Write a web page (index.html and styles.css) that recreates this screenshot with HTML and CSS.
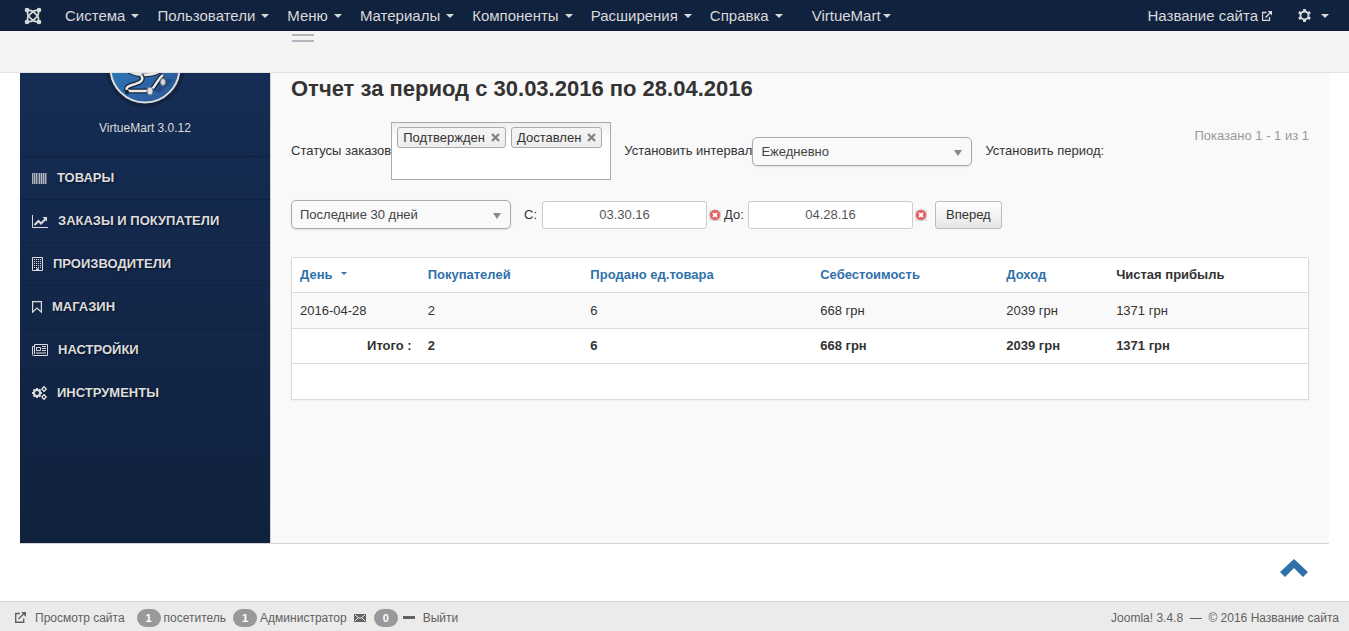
FILE: index.html
```html
<!DOCTYPE html>
<html lang="ru">
<head>
<meta charset="utf-8">
<meta name="viewport" content="width=device-width, initial-scale=1">
<title>Отчет - VirtueMart</title>
<link rel="stylesheet" href="styles.css">
</head>
<body>
<header class="navbar">
  <a class="brand" href="#" aria-label="Joomla">
    <svg width="18" height="18" viewBox="0 0 18 18" fill="none" stroke="currentColor" stroke-width="1.700" stroke-linecap="round"><path d="M3.600 5C3 7.500 4 8.800 5.500 10.200L8 12.600C9.500 14.100 11 15 13.500 14.400M14.400 5C15 7.500 14 8.800 12.500 10.200L10 12.600C8.500 14.100 7 15 4.500 14.400M4.500 3.600C7 3 8.500 3.900 10 5.400L12.500 7.800C14 9.200 15 10.500 14.400 13M13.500 3.600C11 3 9.500 3.900 8 5.400L5.500 7.800C4 9.200 3 10.500 3.600 13"/><g fill="currentColor" stroke="none"><circle cx="3" cy="3" r="2.300"/><circle cx="15" cy="3" r="2.300"/><circle cx="3" cy="15" r="2.300"/><circle cx="15" cy="15" r="2.300"/></g></svg>
  </a>
  <nav class="nav">
    <a class="nav-link" href="#">Система<span class="caret"></span></a>
    <a class="nav-link" href="#">Пользователи<span class="caret"></span></a>
    <a class="nav-link" href="#">Меню<span class="caret"></span></a>
    <a class="nav-link" href="#">Материалы<span class="caret"></span></a>
    <a class="nav-link" href="#">Компоненты<span class="caret"></span></a>
    <a class="nav-link" href="#">Расширения<span class="caret"></span></a>
    <a class="nav-link" href="#">Справка<span class="caret"></span></a>
    <a class="nav-link nav-extra" href="#">VirtueMart<span class="caret"></span></a>
  </nav>
  <a class="site-link" href="#">Название сайта
    <svg width="10" height="10" viewBox="0 0 10 10" fill="none" stroke="currentColor"><path d="M4.500 1.500h-4v8h7V6" stroke-width="1.300"/><path d="M3.500 6.500 8 2" stroke-width="1.500"/><path d="M5.500 0H10v4.500z" fill="currentColor" stroke="none"/></svg>
  </a>
  <button class="gear" type="button" aria-label="Профиль">
    <svg width="13" height="13" viewBox="0 0 14 14" fill="none" stroke="currentColor"><circle cx="7" cy="7" r="4.300" stroke-width="2"/><path d="M7 0v2.500M7 11.500V14M.9 3.500l2.200 1.200M10.900 9.300l2.200 1.200M13.100 3.500l-2.200 1.200M3.100 9.300.9 10.500" stroke-width="3"/></svg>
    <span class="caret"></span>
  </button>
</header>
<div class="subhead"><span class="toggle-lines"></span></div>

<div class="page">
  <aside class="sidebar">
    <div class="logo">
      <svg width="80" height="37" viewBox="0 0 80 37">
        <defs>
          <linearGradient id="disc" x1="0" y1="0" x2="1" y2="1"><stop offset="0" stop-color="#2b86c6"/><stop offset=".55" stop-color="#2e68a8"/><stop offset="1" stop-color="#2b5596"/></linearGradient>
        </defs>
        <circle cx="40" cy="-5" r="39" fill="#12223f"/>
        <circle cx="40" cy="-5" r="34.500" fill="url(#disc)" stroke="#dedede" stroke-width="2"/>
        <path d="M44 17 59 5l9 2-13 13z" fill="#1f4478" opacity=".7"/>
        <path d="M24-2c9 5 22 5 31 0" fill="none" stroke="#16243b" stroke-width="5"/>
        <path d="M24-2c9 5 22 5 31 0" fill="none" stroke="#e6e6e6" stroke-width="3"/>
        <path d="M36 2C40 8 34 10 27 12S20 18 25 18H40C51 18 50 8 58 2" fill="none" stroke="#16243b" stroke-width="5"/>
        <path d="M36 2C40 8 34 10 27 12S20 18 25 18H40C51 18 50 8 58 2" fill="none" stroke="#e8e8e8" stroke-width="2.500"/>
        <g fill="#ddd" stroke="#6d7784"><ellipse cx="45" cy="18" rx="3" ry="4"/><ellipse cx="58" cy="9" rx="2.500" ry="3.500"/></g>
        <ellipse cx="22" cy="19" rx="2" ry="2.500" fill="#16243b"/>
      </svg>
      <span class="version">VirtueMart 3.0.12</span>
    </div>
    <nav class="side-nav">
      <a class="side-link" href="#"><svg width="15" height="11" viewBox="0 0 15 11" fill="currentColor"><path d="M0 0h15v11H0z" opacity=".35"/><path d="M0 0h1v11H0zM2 0h1v11H2zM4 0h1v11H4zM7 0h1v11H7zM9 0h1v11H9zM11 0h1v11h-1zM13 0h1v11h-1z" opacity=".65"/></svg>ТОВАРЫ</a>
      <a class="side-link" href="#"><svg width="16" height="13" viewBox="0 0 16 13" fill="none" stroke="currentColor"><path d="M.5 0v12.500H16"/><path d="m2.500 10 4-4 2.500 2.500L13.500 4" stroke-width="2"/><path d="M10.500 2H15v4.500z" fill="currentColor" stroke="none"/></svg>ЗАКАЗЫ И ПОКУПАТЕЛИ</a>
      <a class="side-link" href="#"><svg width="11" height="14" viewBox="0 0 11 14" fill="none" stroke="currentColor"><path d="M.5.500h10v13H.5z"/><path d="M2 2.500h7M2 4.500h7M2 6.500h7M2 8.500h7M2 10.500h7" stroke-dasharray="1 1"/><path d="M4 12.500h3" stroke-width="2"/></svg>ПРОИЗВОДИТЕЛИ</a>
      <a class="side-link" href="#"><svg width="10" height="12" viewBox="0 0 10 12" fill="none" stroke="currentColor" stroke-width="1.200"><path d="M.6.600h8.800v10.600L5 7 .6 11.200z"/></svg>МАГАЗИН</a>
      <a class="side-link" href="#"><svg width="16" height="12" viewBox="0 0 16 12" fill="none" stroke="currentColor"><path d="M2.500 10V.5h13v11H1.500a1 1 0 0 1-1-1v-8h2M4.500 3.500h4v3h-4zM10 2.500h4M10 4.500h4M10 6.500h4M4 9h10"/></svg>НАСТРОЙКИ</a>
      <a class="side-link" href="#"><svg width="15" height="14" viewBox="0 0 15 14" fill="none" stroke="currentColor"><circle cx="5" cy="7" r="3" stroke-width="2"/><path d="M5 2v2M5 10v2M0 7h2M8 7h2M1.500 3.500l1.300 1.300M7.200 9.200l1.300 1.300M8.500 3.500 7.200 4.800M2.800 9.200l-1.300 1.300" stroke-width="2"/><circle cx="12" cy="3" r="1.700" stroke-width="1.300"/><circle cx="12" cy="11" r="1.700" stroke-width="1.300"/><path d="M12 0v1M12 5v1M9.300 3h1M13.700 3h1M12 8v1M12 13v1M9.300 11h1M13.700 11h1" stroke-width="1.500"/></svg>ИНСТРУМЕНТЫ</a>
    </nav>
  </aside>

  <main class="content">
    <h1 class="title">Отчет за период с 30.03.2016 по 28.04.2016</h1>
    <form class="filters">
      <div class="filter-row">
        <div class="field">
          <label for="status">Статусы заказов</label>
          <div class="chosen" id="status" role="listbox" aria-label="Статусы заказов">
            <span class="tag">Подтвержден<button class="tag-close" type="button" aria-label="Удалить"><svg width="9" height="9" viewBox="0 0 9 9" stroke="currentColor" stroke-width="2.400"><path d="m1 1 7 7M8 1 1 8"/></svg></button></span>
            <span class="tag">Доставлен<button class="tag-close" type="button" aria-label="Удалить"><svg width="9" height="9" viewBox="0 0 9 9" stroke="currentColor" stroke-width="2.400"><path d="m1 1 7 7M8 1 1 8"/></svg></button></span>
          </div>
        </div>
        <div class="field">
          <label for="interval">Установить интервал</label>
          <span class="select-wrap"><select class="select" id="interval"><option>Ежедневно</option></select></span>
        </div>
        <label for="period">Установить период:</label>
        <span class="shown">Показано 1 - 1 из 1</span>
      </div>
      <div class="filter-row">
        <span class="select-wrap"><select class="select" id="period"><option>Последние 30 дней</option></select></span>
        <div class="dates">
          <label class="label-from" for="from">С:</label>
          <input class="date" id="from" type="text" value="03.30.16">
          <button class="clear" type="button" aria-label="Очистить"><svg width="12" height="12" viewBox="0 0 12 12"><path d="M0 1h12v11H0z" fill="#dfe3ea"/><circle cx="6" cy="6" r="5" fill="#e8585a" stroke="#d98083"/><path d="m4 4 4 4M8 4 4 8" stroke="#fff" stroke-width="2"/></svg></button>
          <label class="label-to" for="to">До:</label>
          <input class="date" id="to" type="text" value="04.28.16">
          <button class="clear" type="button" aria-label="Очистить"><svg width="12" height="12" viewBox="0 0 12 12"><path d="M0 1h12v11H0z" fill="#dfe3ea"/><circle cx="6" cy="6" r="5" fill="#e8585a" stroke="#d98083"/><path d="m4 4 4 4M8 4 4 8" stroke="#fff" stroke-width="2"/></svg></button>
          <button class="go" type="button">Вперед</button>
        </div>
      </div>
    </form>
    <table class="report">
      <colgroup><col class="c-day"><col class="c-buyers"><col class="c-sold"><col class="c-cost"><col class="c-income"><col></colgroup>
      <thead>
        <tr><th><a href="#">День<span class="sort"></span></a></th><th><a href="#">Покупателей</a></th><th><a href="#">Продано ед.товара</a></th><th><a href="#">Себестоимость</a></th><th><a href="#">Доход</a></th><th>Чистая прибыль</th></tr>
      </thead>
      <tbody>
        <tr class="odd"><td>2016-04-28</td><td>2</td><td>6</td><td>668 грн</td><td>2039 грн</td><td>1371 грн</td></tr>
        <tr class="total"><td class="sum">Итого :</td><td>2</td><td>6</td><td>668 грн</td><td>2039 грн</td><td>1371 грн</td></tr>
      </tbody>
      <tfoot><tr><td colspan="6">&nbsp;</td></tr></tfoot>
    </table>
  </main>
</div>

<div class="to-top">
  <a href="#" aria-label="Наверх"><svg width="28" height="19" viewBox="0 0 28 19"><path d="M14 0 28 13l-5 5-9-9-9 9-5-5z" fill="#3071a9"/></svg></a>
</div>

<footer class="status">
  <a class="preview" href="#"><svg width="11" height="11" viewBox="0 0 11 11" fill="none" stroke="currentColor"><path d="M5 1.500H.7v8.800h8V6.500" stroke-width="1.400"/><path d="M3.500 7 8.500 2" stroke-width="1.500"/><path d="M6 0h5v5z" fill="currentColor" stroke="none"/></svg>Просмотр сайта</a>
  <span class="stat"><span class="badge">1</span>посетитель</span>
  <span class="stat"><span class="badge">1</span>Администратор</span>
  <a class="mail" href="#" aria-label="Сообщения"><svg width="12" height="8" viewBox="0 0 12 8"><path fill="currentColor" d="M0 0h12v8H0z"/><path d="m1 1 5 3.500L11 1M1 7l3-3M11 7 8 4" fill="none" stroke="#ebebeb"/></svg><span class="badge">0</span></a>
  <a class="logout" href="#"><span class="dash"></span>Выйти</a>
  <span class="copy">Joomla! 3.4.8 &nbsp;—&nbsp; © 2016 Название сайта</span>
</footer>
</body>
</html>
```
FILE: styles.css
```css
* { box-sizing: border-box; }
body {
  margin: 0;
  min-height: 100vh;
  display: flex;
  flex-direction: column;
  background: #fff;
  color: #333;
  font: 13px/18px "Liberation Sans", Arial, sans-serif;
}
a { color: inherit; text-decoration: none; }
button, input, select { font: inherit; color: inherit; margin: 0; }
button { padding: 0; border: 0; background: none; }
svg { display: block; flex: none; }

.navbar {
  display: flex;
  align-items: center;
  height: 31px;
  padding: 1px 20px 0 24px;
  border-bottom: 1px solid #0b1a33;
  background: #10223e;
  color: #d9d9d9;
  font-size: 15px;
}
.brand { margin-right: 14px; }
.nav { display: flex; }
.nav-link { display: flex; align-items: center; padding: 0 9px; }
.nav-extra { margin-left: 11px; }
.caret {
  border: 4px solid transparent;
  border-top-color: currentColor;
  border-bottom: 0;
  margin-left: 6px;
}
.nav-extra .caret { margin-left: 2px; }
.site-link { display: flex; align-items: center; gap: 4px; margin-left: auto; }
.gear { display: flex; align-items: center; margin-left: 26px; }
.gear .caret { margin-left: 10px; }

.subhead {
  height: 42px;
  padding: 3px 0 0 292px;
  border-bottom: 1px solid #e3e3e3;
  background: #f4f4f4;
}
.toggle-lines {
  display: block;
  width: 22px;
  height: 8px;
  border: solid #b5b5bf;
  border-width: 2px 0;
}

.page {
  flex: 1;
  display: flex;
  margin: 0 20px;
  border-bottom: 1px solid #d3d3d3;
  background: #f9f9f9;
}
.sidebar {
  width: 251px;
  flex: none;
  border-right: 1px solid #d3d3d3;
  background: linear-gradient(#152c54, #10213d);
  color: #dcdcdc;
}
.logo { display: flex; flex-direction: column; align-items: center; height: 83px; }
.version { margin-top: 9px; font-size: 12px; }
.side-link {
  display: flex;
  align-items: center;
  gap: 10px;
  height: 43px;
  padding-left: 12px;
  border-top: 1px solid #10213e;
  font-size: 13px;
  font-weight: bold;
  text-shadow: 1px 1px 2px #0a1426;
}

.content { flex: 1; min-width: 0; padding: 0 20px; }
.title { margin: 0 0 22px; padding-top: 5px; font-size: 22px; line-height: 22px; }
.filters { display: flex; flex-direction: column; gap: 20px; }
.filter-row { display: flex; align-items: center; gap: 13px; }
.field { display: flex; align-items: center; white-space: nowrap; }
.chosen {
  display: flex;
  align-items: flex-start;
  gap: 5px;
  width: 220px;
  height: 58px;
  padding: 4px 5px;
  border: 1px solid #aaa;
  background: linear-gradient(#eee, #fff 15px);
}
.tag {
  display: flex;
  align-items: center;
  gap: 6px;
  height: 21px;
  padding: 0 5px;
  border: 1px solid #aaa;
  border-radius: 3px;
  background: linear-gradient(#f4f4f4, #eee);
}
.tag-close { color: #848484; }
.select-wrap { position: relative; width: 220px; }
.select-wrap::after {
  content: "";
  position: absolute;
  top: 13px;
  right: 10px;
  border: 4px solid transparent;
  border-top: 6px solid #888;
  border-bottom: 0;
  pointer-events: none;
}
.select {
  display: block;
  appearance: none;
  width: 100%;
  height: 29px;
  padding: 1px 8px 0;
  border: 1px solid #aaa;
  border-radius: 5px;
  background: #f9f9f9;
  box-shadow: 0 1px 2px rgba(0, 0, 0, .1);
  color: #444;
}
.shown { align-self: flex-start; margin: 5px 0 0 auto; color: #999; }
.dates { display: flex; align-items: center; }
.label-from { width: 18px; }
.label-to { width: 24px; }
.date {
  width: 165px;
  height: 28px;
  padding: 0 6px;
  border: 1px solid #ccc;
  border-radius: 3px;
  background: #fff;
  color: #555;
  text-align: center;
}
.clear { padding: 0 3px 0 2px; }
.go {
  height: 28px;
  margin-left: 5px;
  padding: 0 10px;
  border: 1px solid #bbb;
  border-radius: 3px;
  background: linear-gradient(#fff, #e6e6e6);
}

.report {
  width: 100%;
  margin-top: 28px;
  table-layout: fixed;
  border-collapse: collapse;
  border: 1px solid #ddd;
  background: #fff;
  box-shadow: 0 1px 2px rgba(0, 0, 0, .05);
}
.c-day { width: 12.6%; }
.c-buyers { width: 16%; }
.c-sold { width: 22.6%; }
.c-cost { width: 18.3%; }
.c-income { width: 10.8%; }
.report th, .report td {
  height: 35px;
  padding: 8px;
  border-top: 1px solid #ddd;
  text-align: left;
  white-space: nowrap;
}
.report .odd td, .report tfoot td { height: 36px; }
.report th a { color: #3071a9; }
.sort {
  display: inline-block;
  margin: 0 0 4px 8px;
  border: 3px solid transparent;
  border-top-color: currentColor;
  border-bottom: 0;
}
.odd { background: #f9f9f9; }
.total { font-weight: bold; }
.report .sum { text-align: right; }

.to-top { display: flex; justify-content: flex-end; height: 57px; padding: 15px 41px 0; }

.status {
  display: flex;
  align-items: center;
  height: 30px;
  padding: 2px 10px 0 15px;
  border-top: 1px solid #d4d4d4;
  background: #ebebeb;
  color: #626262;
  font-size: 12px;
  white-space: nowrap;
}
.preview { display: flex; align-items: center; gap: 9px; margin-right: 12px; }
.stat { display: flex; align-items: center; gap: 3px; margin-right: 7px; }
.badge {
  width: 24px;
  height: 18px;
  border-radius: 9px;
  background: #999;
  color: #fff;
  font-size: 11px;
  font-weight: bold;
  text-align: center;
}
.mail { display: flex; align-items: center; gap: 8px; }
.logout { display: flex; align-items: center; gap: 8px; margin-left: 5px; }
.dash { width: 12px; height: 3px; background: currentColor; }
.copy { margin-left: auto; }
```
